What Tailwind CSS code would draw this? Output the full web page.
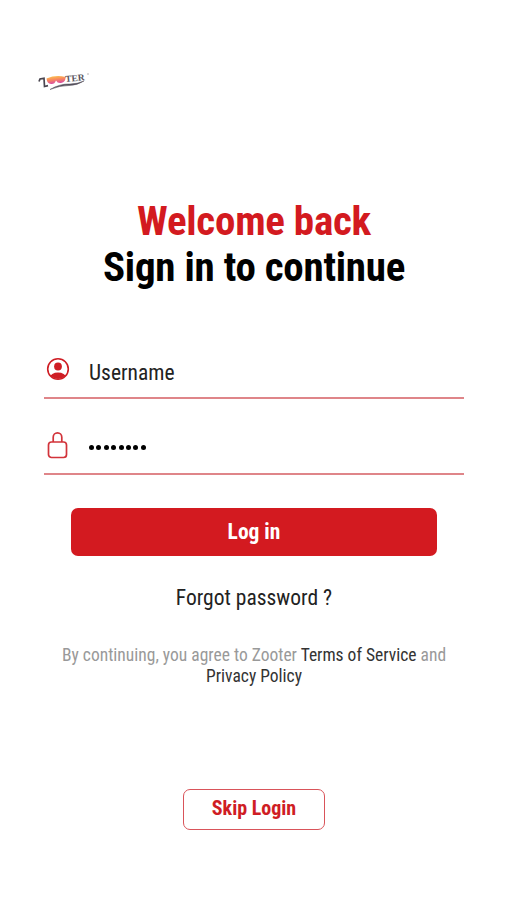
<!DOCTYPE html>
<html lang="en">
<head>
  <meta charset="UTF-8" />
  <meta name="viewport" content="width=device-width, initial-scale=1.0"/>
  <title>Zooter - Sign in</title>
  <script src="https://cdn.jsdelivr.net/npm/@tailwindcss/browser@4"></script>
</head>

<body class="bg-white font-['Roboto_Condensed',Roboto,sans-serif] font-stretch-condensed text-black">
  <div class="w-[507px] h-[900px] overflow-hidden flex flex-col pt-[69px] pl-px">
    <!-- Logo -->
    <svg class="ml-[36px] w-[54px] h-[24px] shrink-0" viewBox="0 0 54 24">
      <defs>
        <linearGradient id="lens" x1="0" y1="0" x2="0.3" y2="1">
          <stop offset="0" stop-color="#fbcf4e" />
          <stop offset="0.5" stop-color="#f98a5c" />
          <stop offset="1" stop-color="#d84aa6" />
        </linearGradient>
      </defs>
      <path d="M2 12.500l1-2.500 4-.700L7.500 17.500l3.500-.800" fill="none" stroke="#4a4650" stroke-width="1.700" />
      <path d="M9.500 9.500Q19 5.500 28.500 8Q29 13 24 14Q20.500 14.500 19 11.500Q17.500 15.500 14 15Q10 14.500 9.500 9.500Z" fill="url(#lens)" />
      <text x="28.500" y="13" transform="rotate(-5 28 13)" font-family="Liberation Serif" font-size="9" font-weight="bold" fill="#5a5660" textLength="19.500" lengthAdjust="spacingAndGlyphs">TER</text>
      <path d="M13 20.500Q23 14.500 33 15Q40 15 47 12Q40 16.500 32 16.500Q23 16.500 13 20.500Z" fill="#55505c" stroke="#55505c" stroke-width="0.500" />
      <circle cx="51" cy="5" r="0.700" fill="#999" />
    </svg>

    <!-- Heading -->
    <h1 class="mt-[105px] text-center text-[41px] leading-[46px] tracking-[-0.250px] font-bold whitespace-nowrap">
      <span class="block text-[#d31a20]">Welcome back</span>
      <span class="block">Sign in to continue</span>
    </h1>

    <!-- Form -->
    <div class="ml-[43px] mr-[43px] mt-[57px]">
      <div class="flex h-[52px] border-b-2 border-[#df8589]">
        <svg class="mt-[10px] ml-[2px] size-6 shrink-0" viewBox="0 0 24 24">
          <clipPath id="face"><circle cx="12" cy="12" r="10" /></clipPath>
          <circle cx="12" cy="12" r="10.300" fill="none" stroke="#cf1d24" stroke-width="1.600" />
          <circle cx="12" cy="9.500" r="3.900" fill="#cf1d24" />
          <ellipse cx="12" cy="20.500" rx="8" ry="5" fill="#cf1d24" clip-path="url(#face)" />
        </svg>
        <span class="ml-[19px] mt-[13px] text-[21.500px] leading-[26px] text-[#222]">Username</span>
      </div>
      <div class="flex h-[76px] border-b-2 border-[#df8589]">
        <svg class="mt-[32px] ml-[3px] w-[22px] h-7 shrink-0" viewBox="0 0 22 28" fill="none" stroke="#d2333a" stroke-width="1.700">
          <rect x="1.500" y="11" width="18" height="15.500" rx="3" />
          <path d="M6.200 11V6.200a4.300 4.300 0 0 1 8.600 0V11" />
        </svg>
        <div class="flex gap-[2.400px] ml-[20px] mt-[46px]">
          <i class="size-[5px] rounded-full bg-black"></i>
          <i class="size-[5px] rounded-full bg-black"></i>
          <i class="size-[5px] rounded-full bg-black"></i>
          <i class="size-[5px] rounded-full bg-black"></i>
          <i class="size-[5px] rounded-full bg-black"></i>
          <i class="size-[5px] rounded-full bg-black"></i>
          <i class="size-[5px] rounded-full bg-black"></i>
          <i class="size-[5px] rounded-full bg-black"></i>
        </div>
      </div>
    </div>

    <button class="mx-auto mt-[33px] w-[366px] h-[48px] shrink-0 rounded-[7px] bg-[#d31a20] text-[21.500px] font-bold text-white">Log in</button>
    <a class="mt-[29px] text-center text-[21.500px] leading-[26px] text-[#222]">Forgot password ?</a>

    <p class="mt-[34px] text-center text-[17.500px] leading-[21px] text-[#999] whitespace-nowrap">
      By continuing, you agree to Zooter <span class="text-[#333]">Terms of Service</span> and<br />
      <span class="text-[#333]">Privacy Policy</span>
    </p>

    <button class="mx-auto mt-[102px] w-[142px] h-[41px] shrink-0 rounded-[7px] border-[1.500px] border-[#d9545a] pb-[3px] text-[20px] font-bold text-[#cf1d24]">Skip Login</button>
  </div>
</body>
</html>
